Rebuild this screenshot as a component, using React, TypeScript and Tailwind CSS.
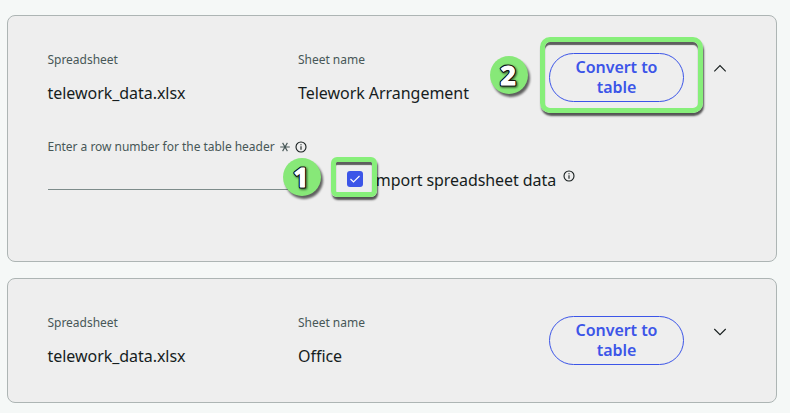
import type { ReactNode } from "react";

function Field({ label, value }: { label: string; value: string }) {
  return (
    <div className="whitespace-nowrap pt-px">
      <div className="text-[12px] leading-4 tracking-[-0.02px] text-[#475757]">{label}</div>
      <div className="mt-[13px] text-[16px] leading-6 tracking-[-0.04px] text-[#161d1d]">{value}</div>
    </div>
  );
}

function InfoIcon({ className }: { className: string }) {
  return (
    <svg viewBox="0 0 12 12" className={"shrink-0 " + className} fill="none" stroke="#161d1d">
      <circle cx="6" cy="6" r="5" strokeWidth="1.1" />
      <path d="M6 5.3V8.8M6 3.2V4.3" strokeWidth="1.1" />
    </svg>
  );
}

function Chevron({ up }: { up?: boolean }) {
  return (
    <svg viewBox="0 0 14 8" className="h-2 w-[14px]" fill="none" stroke="#161d1d" strokeWidth="1.1">
      <path d={up ? "M1.3 7.3L7 1.6L12.7 7.3" : "M1.3 1L7 6.7L12.7 1"} />
    </svg>
  );
}

function Step({ n, className }: { n: string; className: string }) {
  return (
    <svg
      viewBox="0 0 46 46"
      className={"absolute h-[46px] w-[46px] " + className}
      fontFamily="Noto Sans, sans-serif"
      fontWeight="700"
      fontSize="27"
      textAnchor="middle"
      strokeLinejoin="round"
    >
      <circle cx="21" cy="21" r="19" fill="#87e878" className="drop-shadow-[2px_3px_1px_rgba(0,0,0,0.6)]" />
      <text
        x="20"
        y="30.5"
        fill="#fff"
        stroke="#111"
        strokeWidth="3.2"
        paintOrder="stroke"
        className="drop-shadow-[1px_1px_1px_rgba(0,0,0,0.7)]"
      >
        {n}
      </text>
      <text x="20" y="30.5" fill="#fff" stroke="#fff" strokeWidth="0.9" aria-hidden="true">
        {n}
      </text>
    </svg>
  );
}

function Frame({ className }: { className: string }) {
  return (
    <div
      className={
        "pointer-events-none absolute border-[#87ef7a] shadow-[1px_3px_2px_rgba(0,0,0,0.65),inset_0px_3px_1px_rgba(0,0,0,0.6)] " +
        className
      }
    />
  );
}

function SheetCard({
  sheet,
  open,
  overlay,
  className,
  children,
}: {
  sheet: string;
  open?: boolean;
  overlay?: ReactNode;
  className: string;
  children?: ReactNode;
}) {
  return (
    <section className={"rounded-lg border border-[#adb5b4] bg-[#eeeeee] pl-[39.5px] " + className}>
      <div className="grid grid-cols-[250.5px_251px_135px_14px] items-start">
        <Field label="Spreadsheet" value="telework_data.xlsx" />
        <Field label="Sheet name" value={sheet} />
        <div className="relative mt-[2px]">
          <button className="flex h-[49px] w-[135px] items-center rounded-full border border-[#3c55e8] px-4 pb-[2px] text-center text-[16px] leading-5 font-semibold tracking-[-0.05px] text-[#3c55e8]">
            Convert to table
          </button>
          {overlay}
        </div>
        <div className={"ml-[29px] w-[14px] " + (open ? "mt-[13px]" : "mt-[14px]")}>
          <Chevron up={open} />
        </div>
      </div>
      {children}
    </section>
  );
}

export default function App() {
  return (
    <main
      className="h-[413px] w-[790px] overflow-hidden bg-[#f5f8f7] pt-[15px] pl-[7px]"
      style={{ fontFamily: '"Noto Sans", "Open Sans", sans-serif' }}
    >
      <SheetCard
        sheet="Telework Arrangement"
        open
        className="h-[247px] w-[770px] pt-[35px]"
        overlay={
          <>
            <Frame className="top-[-16px] left-[-9px] h-[76px] w-[163px] rounded-[10px] border-[5px]" />
            <Step n="2" className="top-px left-[-61px]" />
          </>
        }
      >
        <div className="mt-[34px] flex">
          <div className="w-[251px]">
            <div className="flex items-center whitespace-nowrap text-[12px] leading-4 tracking-[-0.03px] text-[#475757]">
              Enter a row number for the table header
              <svg viewBox="0 0 10 10" className="ml-[5px] h-[10px] w-[10px] shrink-0" fill="none" stroke="#475757" strokeWidth="1.1">
                <path d="M.2 5H9.8M2.6 .9L7.4 9.1M7.4 .9L2.6 9.1" />
              </svg>
              <InfoIcon className="ml-[5px] h-3 w-3" />
            </div>
            <div className="h-[35px] border-b border-[#7d8b8a]" />
          </div>
          <div className="relative mt-[28px] ml-[0.5px] flex h-6 items-center pl-12">
            <span className="flex h-4 w-4 items-center justify-center rounded-[3px] bg-[#3c55e8]">
              <svg viewBox="0 0 12 12" className="h-3 w-3" fill="none" stroke="#fff" strokeWidth="1.1">
                <path d="M1.5 6L4.5 9L10.5 3" />
              </svg>
            </span>
            <span className="ml-[9px] whitespace-nowrap pt-[2px] text-[16px] leading-6 tracking-[-0.07px] text-[#161d1d]">
              <span className="mr-[-1.5px]">I</span>mport spreadsheet data
            </span>
            <InfoIcon className="mb-[7px] ml-[7px] h-3 w-3" />
            <Frame className="top-[-10px] left-[32px] h-[40px] w-[46px] rounded-[6px] border-[5px]" />
            <Step n="1" className="top-[-11px] left-[-18px]" />
          </div>
        </div>
      </SheetCard>
      <SheetCard sheet="Office" className="mt-4 h-[125px] w-[770px] pt-[35px]" />
    </main>
  );
}
